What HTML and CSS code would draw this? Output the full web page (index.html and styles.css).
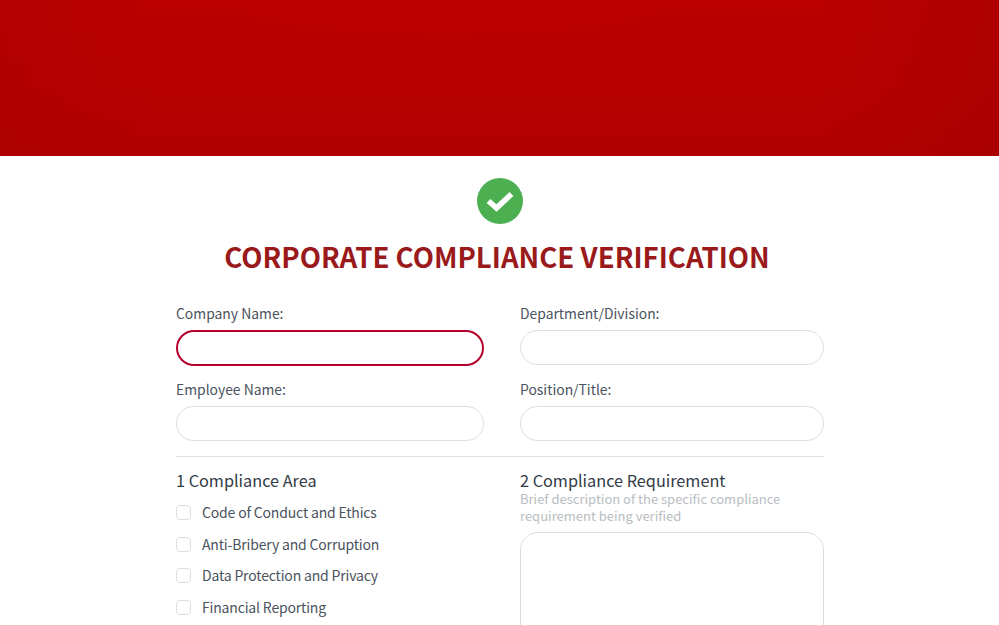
FILE: index.html
```html
<!DOCTYPE html>
<html lang="en">

<head>
    <meta charset="UTF-8">
    <meta name="viewport" content="width=device-width, initial-scale=1.0">
    <title>Corporate Compliance Verification</title>
    <link rel="stylesheet" href="styles.css">
</head>

<body>
    <!-- Red banner -->
    <div class="banner"></div>

    <div class="form">
        <div class="check-icon">
            <svg width="46" height="46" viewBox="0 0 46 46">
                <circle cx="23" cy="23" r="23" fill="#4caf50" />
                <path d="M11.5 23l8 7 15-14" fill="none" stroke="#fff" stroke-width="5.5" />
            </svg>
        </div>
        <h1 class="title">CORPORATE COMPLIANCE VERIFICATION</h1>

        <!-- Contact fields -->
        <div class="fields">
            <div class="field">
                <label class="field-label">Company Name:</label>
                <input class="text-input focused" type="text">
            </div>
            <div class="field">
                <label class="field-label">Department/Division:</label>
                <input class="text-input" type="text">
            </div>
            <div class="field">
                <label class="field-label">Employee Name:</label>
                <input class="text-input" type="text">
            </div>
            <div class="field">
                <label class="field-label">Position/Title:</label>
                <input class="text-input" type="text">
            </div>
        </div>

        <hr class="divider">

        <!-- Questions -->
        <div class="questions">
            <div class="question">
                <h2 class="question-title">1 Compliance Area</h2>
                <ul class="options">
                    <li class="option"><span class="box"></span>Code of Conduct and Ethics</li>
                    <li class="option"><span class="box"></span>Anti-Bribery and Corruption</li>
                    <li class="option"><span class="box"></span>Data Protection and Privacy</li>
                    <li class="option"><span class="box"></span>Financial Reporting</li>
                </ul>
            </div>
            <div class="question">
                <h2 class="question-title">2 Compliance Requirement</h2>
                <p class="hint">Brief description of the specific compliance requirement being verified</p>
                <textarea class="text-area"></textarea>
            </div>
        </div>
    </div>
</body>

</html>
```

FILE: styles.css
```css
html,
body {
    height: 625px;
    overflow: hidden;
}

body {
    margin: 0;
    background-color: #fff;
    font-family: "Noto Sans CJK KR", "Noto Sans", sans-serif;
    color: #4a535e;
}

/* Top banner */
.banner {
    height: 156px;
    background:
        radial-gradient(ellipse 260px 40px at 45% 0, #be0000, rgba(190, 0, 0, 0)),
        linear-gradient(90deg, rgba(165, 0, 0, 0.3), rgba(165, 0, 0, 0) 15%, rgba(165, 0, 0, 0) 82%, rgba(165, 0, 0, 0.55)),
        linear-gradient(180deg, #ba0000 0%, #b70000 55%, #b10000 100%);
}

.form {
    width: 648px;
    margin-left: 176px;
    padding-top: 22px;
}

.check-icon {
    height: 46px;
    text-align: center;
}

.title {
    margin: 12px 0 0 -6px;
    font-size: 27.6px;
    line-height: 40px;
    font-weight: 700;
    text-align: center;
    color: #9a1a1c;
}

/* Text fields */
.fields {
    display: grid;
    grid-template-columns: 308px 304px;
    column-gap: 36px;
    row-gap: 12px;
    margin-top: 25px;
}

.field-label {
    display: block;
    font-size: 13.9px;
    line-height: 24px;
    height: 24px;
    margin-bottom: 5px;
}

.text-input {
    display: block;
    box-sizing: border-box;
    width: 100%;
    height: 35px;
    border: 1px solid #dcdfe2;
    border-radius: 18px;
    outline: none;
    background-color: #fff;
}

.text-input.focused {
    height: 36px;
    margin-bottom: -1px;
    border: 2px solid #b5002c;
}

.divider {
    margin: 15px 0 0;
    border: none;
    border-top: 1px solid #dfe1e3;
}

/* Questions */
.questions {
    display: grid;
    grid-template-columns: 308px 304px;
    column-gap: 36px;
    margin-top: 11px;
}

.question-title {
    margin: 0;
    padding-top: 2px;
    font-size: 16.25px;
    line-height: 20px;
    font-weight: 400;
    color: #323b46;
}

.options {
    margin: 10px 0 0;
    padding: 0;
    list-style: none;
}

.option {
    display: flex;
    align-items: center;
    height: 24px;
    margin-bottom: 7.7px;
    font-size: 14px;
    letter-spacing: -0.17px;
    line-height: 24px;
}

.box {
    box-sizing: border-box;
    flex: none;
    width: 15px;
    height: 15px;
    margin: 1px 11px 0 0;
    border: 1px solid #dcdfe2;
    border-radius: 4px;
}

.hint {
    margin: 0;
    font-size: 13px;
    line-height: 17px;
    color: #b9bdc1;
}

.text-area {
    display: block;
    box-sizing: border-box;
    width: 100%;
    height: 200px;
    margin-top: 8px;
    border: 1px solid #dcdfe2;
    border-radius: 18px;
    outline: none;
    resize: none;
}
```
